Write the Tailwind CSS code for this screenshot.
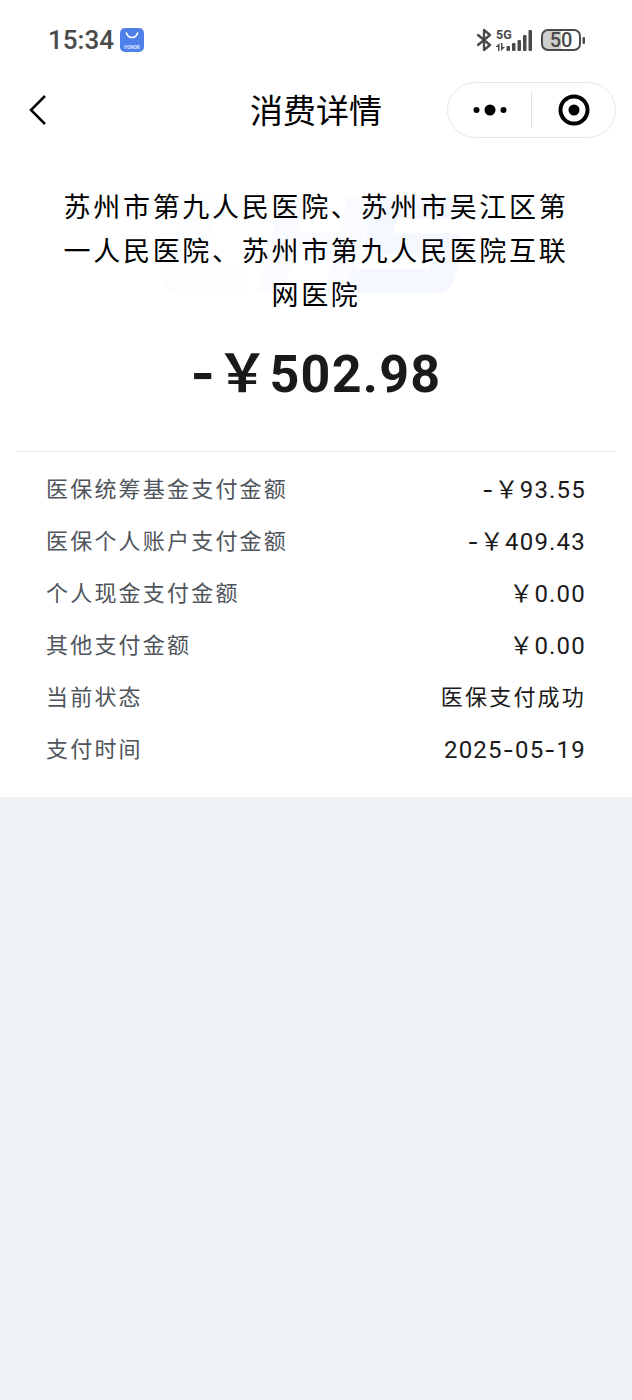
<!DOCTYPE html>
<html lang="zh-CN">
<head>
    <meta charset="UTF-8">
    <meta name="viewport" content="width=device-width, initial-scale=1.0">
    <title>消费详情</title>
    <!-- Tailwind CSS -->
    <script src="https://cdn.jsdelivr.net/npm/@tailwindcss/browser@4"></script>
</head>
<body class="min-h-screen bg-[#eef2f5] font-['Roboto','Noto_Sans_CJK_SC',sans-serif] text-[#1a1a1a]">
    <div class="bg-white">
        <!-- Status Bar -->
        <div class="flex h-20 items-center justify-between pl-12 pr-[46px] text-[#4a4a4a]">
            <div class="flex items-center gap-1.5">
                <span class="text-[26px] leading-8 font-medium">15:34</span>
                <svg class="size-6" viewBox="0 0 24 24" aria-hidden="true">
                    <rect width="24" height="24" rx="5" fill="#4f80ea"/>
                    <path d="M6.500 5c1.500 6 9.500 6 11 0" fill="none" stroke="#fff" stroke-width="1.600" stroke-linecap="round"/>
                    <text x="12" y="20.500" text-anchor="middle" font-size="4.500" font-weight="700" fill="#dce7ff">HONOR</text>
                </svg>
            </div>
            <div class="flex items-center gap-2">
                <!-- Bluetooth -->
                <svg class="h-6 w-4" viewBox="0 0 16 24" fill="none" stroke="currentColor" stroke-width="2.300" stroke-linejoin="round" stroke-linecap="round" aria-hidden="true">
                    <path d="M2 7l12 10-6 5V2l6 5L2 17"/>
                </svg>
                <!-- Signal -->
                <svg class="-ml-1 h-6 w-[37px]" viewBox="0 0 37 24" fill="currentColor" aria-hidden="true">
                    <text x="0" y="11" font-size="12.500" font-weight="700">5G</text>
                    <path d="M0 18.500L3.500 15v8H2v-4H0zM5 15h1.500v4H9l-4 4z"/>
                    <rect x="10.500" y="18" width="3.500" height="5" rx="1"/>
                    <rect x="16" y="15" width="3.500" height="8" rx="1"/>
                    <rect x="21.500" y="12" width="3.500" height="11" rx="1"/>
                    <rect x="27" y="7" width="3.500" height="16" rx="1"/>
                    <rect x="32.500" y="2" width="3.500" height="21" rx="1"/>
                </svg>
                <!-- Battery -->
                <svg class="h-6 w-[45px]" viewBox="0 0 45 24" aria-hidden="true">
                    <path d="M7 2h13v20H7a5 5 0 0 1-5-5V7a5 5 0 0 1 5-5z" fill="#cfcfcf"/>
                    <rect x="1" y="2" width="38" height="20" rx="6" fill="none" stroke="currentColor" stroke-width="2"/>
                    <rect x="41.500" y="9" width="2.500" height="7" rx="1" fill="currentColor"/>
                    <text x="20" y="19" text-anchor="middle" font-size="20" font-weight="500" fill="currentColor">50</text>
                </svg>
            </div>
        </div>

        <!-- Title Bar -->
        <header class="grid h-[59px] grid-cols-[1fr_auto_1fr] items-center px-4 text-black">
            <button type="button" aria-label="返回" class="ml-2 w-7">
                <svg class="h-8 w-7" viewBox="0 0 28 32" fill="none" stroke="currentColor" stroke-width="2.500" aria-hidden="true">
                    <path d="M21 2L7 16l14 14"/>
                </svg>
            </button>
            <h1 class="pt-1 text-[33px] leading-10">消费详情</h1>
            <div class="flex h-14 w-[169px] items-center justify-self-end rounded-full border border-[#e8e8e8]">
                <button type="button" aria-label="更多" class="flex flex-1 justify-center">
                    <svg class="h-3 w-9" viewBox="0 0 36 12" fill="currentColor" aria-hidden="true">
                        <circle cx="4.500" cy="6" r="3"/>
                        <circle cx="18" cy="6" r="5.500"/>
                        <circle cx="31.500" cy="6" r="3"/>
                    </svg>
                </button>
                <span class="h-9 w-px bg-[#e0e0e0]"></span>
                <button type="button" aria-label="关闭" class="flex flex-1 justify-center">
                    <svg class="size-8" viewBox="0 0 32 32" aria-hidden="true">
                        <circle cx="16" cy="16" r="13.500" fill="none" stroke="currentColor" stroke-width="4"/>
                        <circle cx="16" cy="16" r="5.500" fill="currentColor"/>
                    </svg>
                </button>
            </div>
        </header>

        <main>
            <!-- Amount -->
            <section class="relative mx-4 border-b border-[#ebebeb] px-11 pt-[47px] pb-11 text-center">
                <!-- Watermark -->
                <svg class="absolute top-[58px] left-1/2 h-[98px] w-[310px] -translate-x-1/2" viewBox="0 0 310 98" aria-hidden="true">
                    <path d="M34 0h70l-5 22H54L39 72h49l-6 24H14Q0 96 4 80L18 14Q22 0 34 0z" fill="#fbfdff"/>
                    <path d="M121 0h26l-9 36h40l9-36h27l-25 96h-26l10-38h-41L122 96H96z" fill="#f9fbff"/>
                    <path d="M222 0h84l-6 22h-64l-4 14h58q14 0 11 14l-8 32q-4 14-18 14h-90l6-24h78l4-14h-58q-14 0-11-14l6-30q3-14 12-14z" fill="#f5f8ff"/>
                </svg>
                <h2 class="relative text-[27px] leading-[44px] tracking-widest text-black">苏州市第九人民医院、苏州市吴江区第一人民医院、苏州市第九人民医院互联网医院</h2>
                <p class="relative mt-6 text-[52px] leading-[64px] font-bold tracking-wide"><span class="font-['Inter']">-</span>&#xFFE5;502.98</p>
            </section>

            <!-- Payment Details -->
            <dl class="space-y-5 px-[46px] pt-[22px] pb-[31px] text-[22px] leading-8">
                <div class="flex justify-between">
                    <dt class="tracking-widest text-[#50555c]">医保统筹基金支付金额</dt>
                    <dd class="text-2xl leading-8 tracking-wider"><span class="font-['Inter']">-</span>&#xFFE5;93.55</dd>
                </div>
                <div class="flex justify-between">
                    <dt class="tracking-widest text-[#50555c]">医保个人账户支付金额</dt>
                    <dd class="text-2xl leading-8 tracking-wider"><span class="font-['Inter']">-</span>&#xFFE5;409.43</dd>
                </div>
                <div class="flex justify-between">
                    <dt class="tracking-widest text-[#50555c]">个人现金支付金额</dt>
                    <dd class="text-2xl leading-8 tracking-wider">&#xFFE5;0.00</dd>
                </div>
                <div class="flex justify-between">
                    <dt class="tracking-widest text-[#50555c]">其他支付金额</dt>
                    <dd class="text-2xl leading-8 tracking-wider">&#xFFE5;0.00</dd>
                </div>
                <div class="flex justify-between">
                    <dt class="tracking-widest text-[#50555c]">当前状态</dt>
                    <dd class="tracking-widest">医保支付成功</dd>
                </div>
                <div class="flex justify-between">
                    <dt class="tracking-widest text-[#50555c]">支付时间</dt>
                    <dd class="text-2xl leading-8 tracking-wider">2025<span class="font-['Inter']">-</span>05<span class="font-['Inter']">-</span>19</dd>
                </div>
            </dl>
        </main>
    </div>
</body>
</html>
